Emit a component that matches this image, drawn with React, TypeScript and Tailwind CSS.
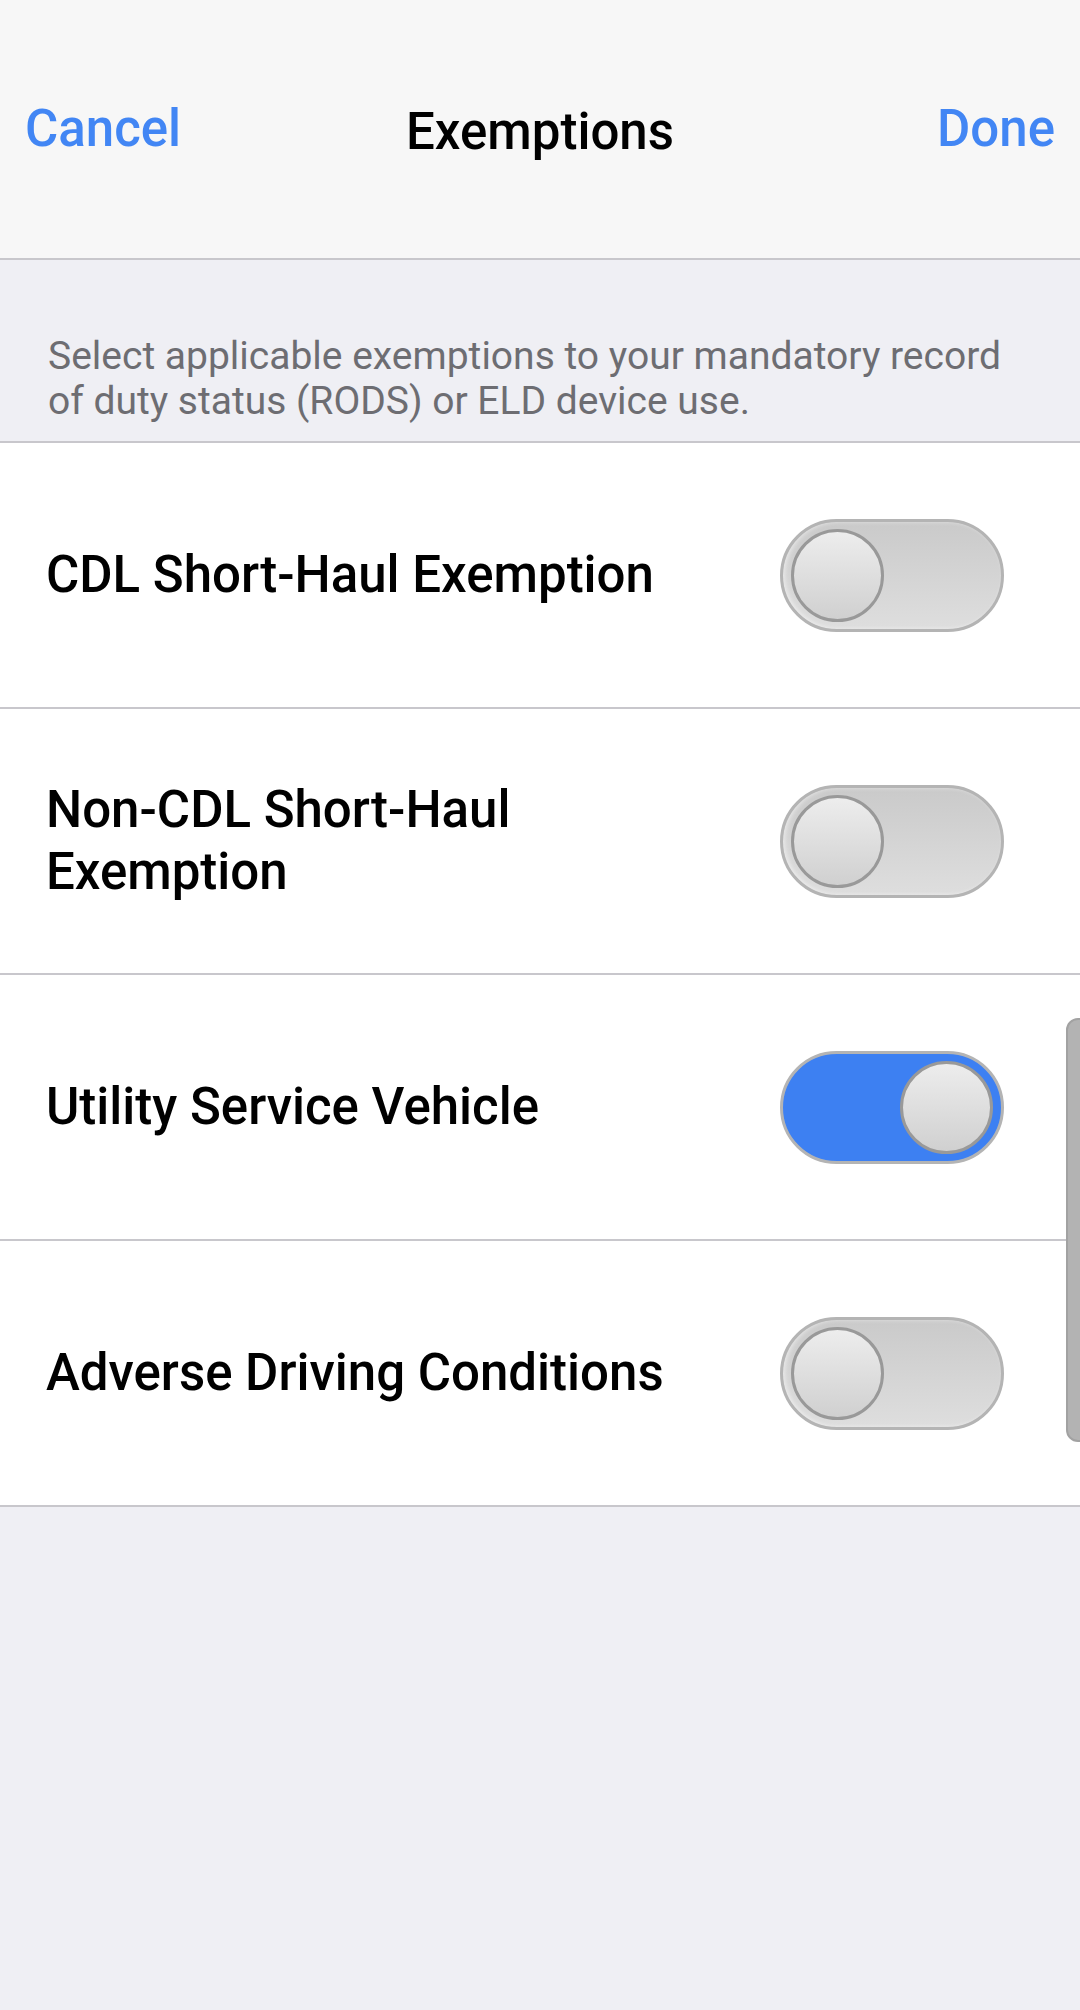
import React, { useState } from 'react';

type Exemption = { id: string; label: string; enabled: boolean };

const initial: Exemption[] = [
  { id: 'cdl', label: 'CDL Short-Haul Exemption', enabled: false },
  { id: 'noncdl', label: 'Non-CDL Short-Haul Exemption', enabled: false },
  { id: 'utility', label: 'Utility Service Vehicle', enabled: true },
  { id: 'adverse', label: 'Adverse Driving Conditions', enabled: false },
];

const Toggle = ({ on, onChange }: { on: boolean; onChange: () => void }) => (
  <button
    onClick={onChange}
    className={`shrink-0 w-[224px] h-[113px] rounded-full border-[3px] border-[#b4b4b4] flex items-center px-[8px] ${
      on
        ? 'bg-[#3d80f2] justify-end'
        : 'bg-gradient-to-b from-[#cacaca] to-[#dedede] justify-start shadow-[inset_2px_0_4px_rgba(255,255,255,0.5)]'
    }`}
  >
    <span className="block w-[93px] h-[93px] rounded-full border-[3px] border-[#999999] bg-gradient-to-b from-[#ededed] to-[#d0d0d0]" />
  </button>
);

export default function App() {
  const [items, setItems] = useState(initial);

  const flip = (id: string) =>
    setItems((prev) => prev.map((it) => (it.id === id ? { ...it, enabled: !it.enabled } : it)));

  return (
    <div className="relative min-h-[2010px] w-[1080px] bg-[#efeff4] font-['Roboto',sans-serif] overflow-hidden">
      {/* nav bar */}
      <div className="h-[260px] bg-[#f7f7f7] border-b-[2px] border-[#c8c7cc] flex items-center justify-between px-[25px]">
        <span className="text-[51px] font-medium text-[#4286f4] w-[200px]">Cancel</span>
        <span className="text-[51px] font-medium text-black mt-[6px]">Exemptions</span>
        <span className="text-[51px] font-medium text-[#4286f4] w-[200px] text-right">Done</span>
      </div>

      <div className="h-[183px] border-b-[2px] border-[#c8c7cc] flex flex-col justify-end pl-[48px] pr-[50px] pb-[17px]">
        <p className="text-[39px] leading-[45px] text-[#6d6d72]">
          Select applicable exemptions to your mandatory record of duty status (RODS) or ELD device use.
        </p>
      </div>

      <div className="bg-white">
        {items.map((it) => (
          <div
            key={it.id}
            className="h-[266px] border-b-[2px] border-[#c8c7cc] flex items-center justify-between pl-[46px] pr-[76px]"
          >
            <span className="text-[51px] leading-[62px] font-medium text-black max-w-[640px]">{it.label}</span>
            <Toggle on={it.enabled} onChange={() => flip(it.id)} />
          </div>
        ))}
      </div>

      {/* scroll indicator */}
      <div className="absolute left-[1066px] top-[1018px] w-[24px] h-[424px] rounded-l-[12px] bg-[#b3b3b3] border-[2px] border-[#a2a2a2]" />
    </div>
  );
}
